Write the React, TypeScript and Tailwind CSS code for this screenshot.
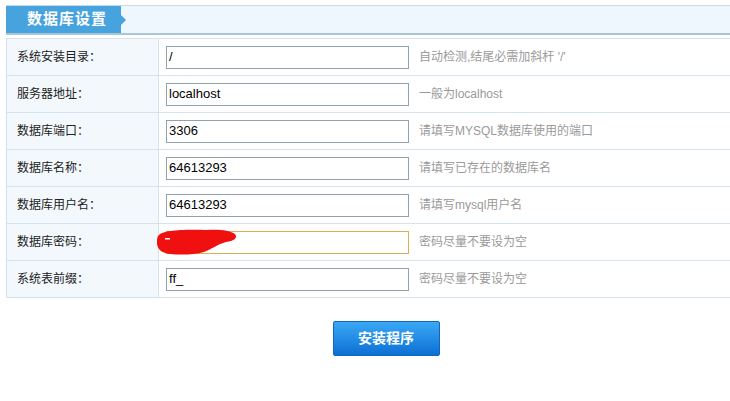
const rows = [
  { label: '系统安装目录：', value: '/', hint: "自动检测,结尾必需加斜杆 '/'" },
  { label: '服务器地址：', value: 'localhost', hint: '一般为localhost' },
  { label: '数据库端口：', value: '3306', hint: '请填写MYSQL数据库使用的端口' },
  { label: '数据库名称：', value: '64613293', hint: '请填写已存在的数据库名' },
  { label: '数据库用户名：', value: '64613293', hint: '请填写mysql用户名' },
  { label: '数据库密码：', value: '', hint: '密码尽量不要设为空', password: true },
  { label: '系统表前缀：', value: 'ff_', hint: '密码尽量不要设为空' },
]

export default function App() {
  return (
    <div
      className="w-[730px] h-[401px] bg-white overflow-hidden pt-[5px] pl-[6px]"
      style={{ fontFamily: '"Liberation Sans", Arial, "Noto Sans CJK SC", sans-serif' }}
    >
      {/* Header bar */}
      <div className="h-[30px] flex border-t border-[#c5dbe9] border-b-2 border-b-[#a9c6d8] bg-[#eef7fe]">
        <div className="relative h-full w-[115px] bg-[#46a3dd] flex items-center pl-[21px]">
          <span className="text-white text-[15px] font-bold tracking-[1px]">数据库设置</span>
          <span className="absolute right-[-5px] top-[9px] w-0 h-0 border-y-[5px] border-y-transparent border-l-[5px] border-l-[#46a3dd]" />
        </div>
      </div>

      {/* Form table */}
      <div className="mt-[3px] border-l border-t border-[#d5e3ee]">
        {rows.map((r) => (
          <div key={r.label} className="flex h-[37px] border-b border-[#d5e3ee]">
            <div className="w-[152px] shrink-0 bg-[#f3f8fd] border-r border-[#d5e3ee] flex items-center pl-[10px] text-[12px] text-[#222]">
              {r.label}
            </div>
            <div className="flex-1 flex items-center pl-[7px]">
              <div className="relative">
                <div
                  className={
                    r.password
                      ? 'w-[243px] h-[23px] border border-[#dcae5c] bg-white flex items-center px-[2px] text-[13px] text-black'
                      : 'w-[243px] h-[23px] border border-[#8ea4b4] bg-white flex items-center px-[2px] text-[13px] text-black'
                  }
                >
                  {r.value}
                </div>
                {r.password && (
                  <svg className="absolute left-[-10px] top-[-9px] z-10" width="90" height="36" viewBox="0 0 90 36">
                    <path
                      d="M3 13 C6 8, 30 7, 50 8 C62 7, 74 8, 79 12 C82 16, 78 19, 70 20 C62 22, 56 27, 48 30 C38 33, 24 33, 14 32 C6 31, 2 28, 1 22 C1 17, 1 15, 3 13 Z"
                      fill="#f01010"
                    />
                    <rect x="9" y="16" width="5" height="1.5" fill="#fff" />
                  </svg>
                )}
              </div>
              <span className="ml-[10px] text-[12px] text-[#9a9a9a]">{r.hint}</span>
            </div>
          </div>
        ))}
      </div>

      {/* Submit */}
      <div className="flex justify-center pr-[6px] mt-[23px]">
        <button className="w-[107px] h-[35px] ml-[42px] rounded-[2px] border border-[#1565b8] bg-gradient-to-b from-[#3aa8f5] to-[#0b70d4] text-white text-[14px] font-bold">
          安装程序
        </button>
      </div>
    </div>
  )
}
